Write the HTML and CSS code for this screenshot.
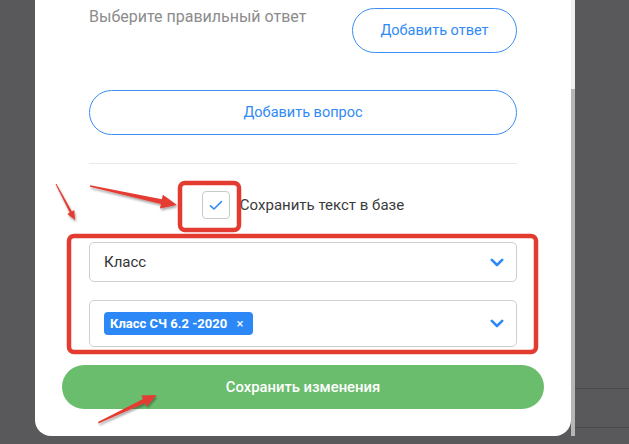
FILE: index.html
```html
<!DOCTYPE html>
<html>
<head>
    <meta charset="utf-8" />
    <title>Редактирование вопроса</title>
    <link rel="stylesheet" href="styles.css">
</head>
<body>
    <div class="page">
        <div class="gutter"></div>

        <div class="modal">
            <div class="answer-row">
                <span class="hint">Выберите правильный ответ</span>
                <button class="btn-outline btn-answer">Добавить ответ</button>
            </div>

            <button class="btn-outline btn-question">Добавить вопрос</button>

            <div class="divider"></div>

            <label class="check-row">
                <span class="check-box">
                    <svg width="14" height="11" viewBox="0 0 14 11">
                        <path d="M1.5 5.8 L5 9 L12.5 1.5" fill="none" stroke="#2f8af5" stroke-width="1.6" stroke-linecap="round" stroke-linejoin="round" />
                    </svg>
                </span>
                <span class="check-text">Сохранить текст в базе</span>
            </label>

            <div class="select select-class">
                <span class="select-value">Класс</span>
                <svg class="chevron" width="14" height="9" viewBox="0 0 14 9">
                    <path d="M1.8 1.8 L7 7 L12.2 1.8" fill="none" stroke="#2f8af5" stroke-width="2.6" stroke-linecap="round" stroke-linejoin="round" />
                </svg>
            </div>

            <div class="select select-tags">
                <span class="tag">Класс СЧ 6.2 -2020 <span class="tag-close">×</span></span>
                <svg class="chevron" width="14" height="9" viewBox="0 0 14 9">
                    <path d="M1.8 1.8 L7 7 L12.2 1.8" fill="none" stroke="#2f8af5" stroke-width="2.6" stroke-linecap="round" stroke-linejoin="round" />
                </svg>
            </div>

            <button class="btn-save">Сохранить изменения</button>
        </div>

        <div class="scrollbar">
            <div class="scroll-track"></div>
            <div class="scroll-thumb"></div>
        </div>

        <div class="backdrop">
            <div class="backdrop-line"></div>
            <div class="backdrop-line"></div>
        </div>

        <!-- пометки поверх формы -->
        <svg class="marks" width="629" height="444" viewBox="0 0 629 444">
            <defs>
                <filter id="shade" x="-20%" y="-20%" width="140%" height="140%">
                    <feDropShadow dx="1" dy="2" stdDeviation="1" flood-color="#000" flood-opacity="0.35" />
                </filter>
            </defs>
            <rect x="180" y="183" width="59" height="47" rx="5" fill="none" stroke="#e43b30" stroke-width="4.5" />
            <rect x="69" y="236" width="467" height="116" rx="5" fill="none" stroke="#e43b30" stroke-width="4.5" />
            <polygon filter="url(#shade)" fill="#e43b30" points="56.4,183.8 71.9,211.4 74.3,210.1 75,220 67.3,213.9 69.7,212.6 55.6,184.2" />
            <polygon filter="url(#shade)" fill="#e43b30" points="90.2,185.3 161.9,199.2 162.9,194.8 177,205 159.9,208.4 160.9,204 89.8,186.7" />
            <polygon filter="url(#shade)" fill="#e43b30" points="98,422 143.1,399 141.4,395.6 156.7,395 146.6,406.4 144.9,403 98.6,423.4" />
        </svg>
    </div>
</body>
</html>
```

FILE: styles.css
```css
body {
    margin: 0;
    background-color: #59595b;
    font-family: Roboto, "Liberation Sans", sans-serif;
    overflow: hidden;
}

.page {
    position: relative;
    display: flex;
    height: 444px;
}

.gutter {
    width: 35px;
    flex-shrink: 0;
}

.modal {
    width: 536px;
    height: 436px;
    flex-shrink: 0;
    box-sizing: border-box;
    padding: 8px 54px 0;
    background-color: #fff;
    border-radius: 0 0 16px 16px;
    display: flex;
    flex-direction: column;
}

.answer-row {
    display: flex;
    justify-content: space-between;
    align-items: flex-start;
}

.hint {
    color: #8c8c8c;
    font-size: 16px;
    line-height: 18px;
}

.btn-outline {
    height: 45px;
    padding: 0;
    border: 1px solid #3a8ef6;
    border-radius: 23px;
    background-color: #fff;
    color: #2f8af5;
    font-family: Roboto, "Liberation Sans", sans-serif;
    font-size: 14.5px;
}

.btn-answer {
    width: 165px;
}

.btn-question {
    width: 100%;
    margin-top: 37px;
}

.divider {
    height: 1px;
    margin-top: 28px;
    background-color: #e8e8ef;
}

.check-row {
    margin-top: 27px;
    display: flex;
    justify-content: center;
    align-items: center;
    gap: 10px;
}

.check-box {
    width: 28px;
    height: 28px;
    box-sizing: border-box;
    border: 1px solid #c9c9c9;
    border-radius: 4px;
    display: flex;
    align-items: center;
    justify-content: center;
}

.check-text {
    color: #3b3b3b;
    font-size: 15px;
}

.select {
    box-sizing: border-box;
    border: 1px solid #cfcfcf;
    border-radius: 5px;
    padding: 0 12px 0 14px;
    display: flex;
    align-items: center;
    justify-content: space-between;
}

.select-class {
    height: 40px;
    margin-top: 23px;
}

.select-tags {
    height: 47px;
    margin-top: 18px;
}

.select-value {
    color: #333;
    font-size: 15px;
}

.tag {
    height: 23px;
    padding: 0 10px 0 6px;
    border-radius: 4px;
    background-color: #2b88f6;
    color: #fff;
    font-size: 13px;
    font-weight: bold;
    line-height: 23px;
}

.tag-close {
    margin-left: 6px;
    font-weight: normal;
    font-size: 13px;
}

.btn-save {
    height: 44px;
    margin: 18px -27px 0;
    border: none;
    border-radius: 22px;
    background-color: #6bbd6e;
    color: #fff;
    font-family: Roboto, "Liberation Sans", sans-serif;
    font-size: 14.8px;
    font-weight: 500;
}

.scrollbar {
    width: 4px;
    height: 436px;
    flex-shrink: 0;
    display: flex;
    flex-direction: column;
}

.scroll-track {
    height: 89px;
    background-color: #f1f1f1;
}

.scroll-thumb {
    flex: 1;
    background-color: #b6b6b6;
}

.backdrop {
    flex: 1;
    padding-top: 388px;
}

.backdrop-line {
    height: 1px;
    margin-bottom: 38px;
    background-color: #4a4a4c;
}

.marks {
    position: absolute;
    top: 0;
    left: 0;
    pointer-events: none;
}
```
